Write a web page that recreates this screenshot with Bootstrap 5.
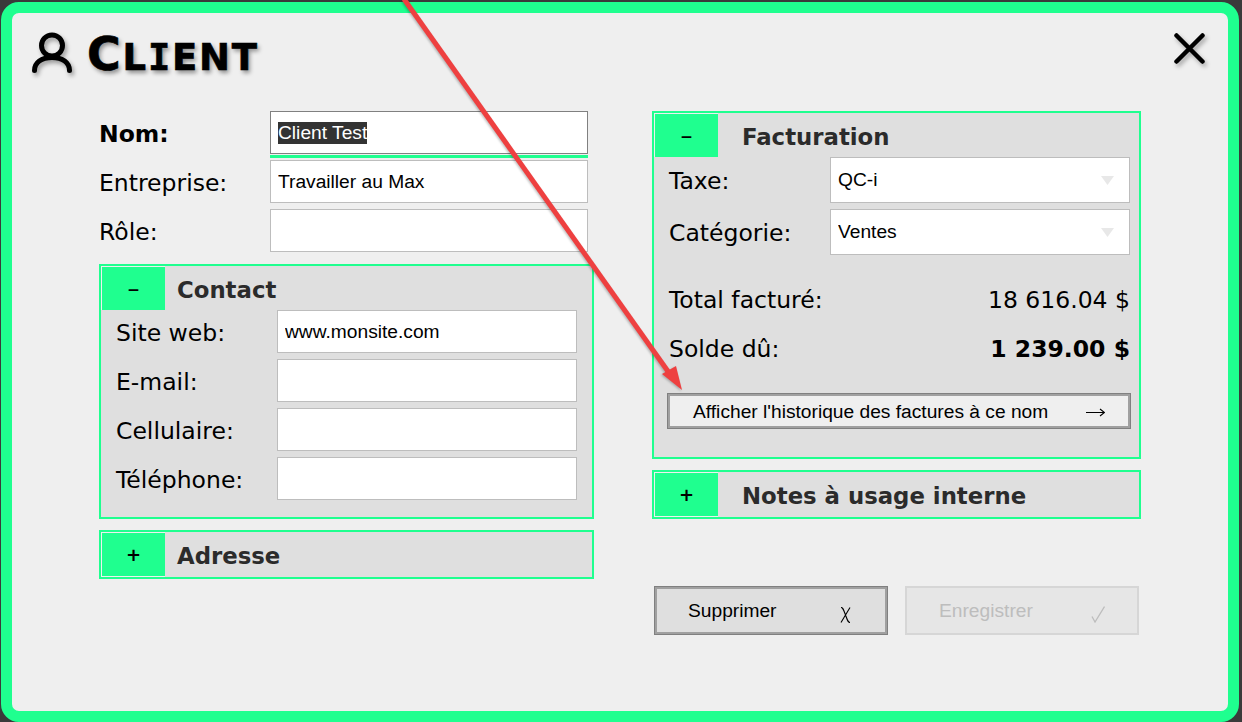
<!DOCTYPE html>
<html lang="fr">
<head>
    <meta charset="UTF-8">
    <meta name="viewport" content="width=device-width, initial-scale=1.0">
    <title>Client</title>
    <link href="https://cdn.jsdelivr.net/npm/bootstrap@5.3.0/dist/css/bootstrap.min.css" rel="stylesheet">
    <style>
        html, body { height: 100%; overflow: hidden; }
        body { background: #3a3a3a; padding: 2px 3px 0 1px; font-family: "DejaVu Sans", sans-serif; color: #000; position: relative; }
        .win-frame { height: 720px; background: #efefef; border: 11px solid #1fff8f; border-radius: 18px; box-sizing: border-box; position: relative; }
        .win-head { height: 98px; padding: 19px 0 0 20px; gap: 15px; }
        .win-title { font: bold 37px "DejaVu Sans", sans-serif; text-transform: uppercase; letter-spacing: 1.8px; margin: 0; -webkit-text-stroke: .6px #000; text-shadow: 2px 3px 4px rgba(0,0,0,.4); line-height: 44px; white-space: nowrap; }
        .title-cap { font-size: 46px; }
        .title-slab { font-family: "DejaVu Sans Mono", monospace; }
        .user-icon { filter: drop-shadow(2px 3px 2px rgba(0,0,0,.35)); }
        .win-close { position: absolute; top: 20px; right: 23px; background: none; border: 0; padding: 0; line-height: 0; filter: drop-shadow(2px 3px 2px rgba(0,0,0,.3)); }
        .form-wrap { padding-left: 87px; gap: 58px; }
        .col-left { width: 495px; }
        .col-right { width: 489px; }
        .field-row { display: flex; align-items: center; }
        .field-label { font-size: 23.5px; line-height: 1; margin: 0; padding-top: 4px; }
        .field-box { font: 19.2px "Liberation Sans", sans-serif; color: #000; background: #fff; border: 1px solid #bdbdbd; border-radius: 0; height: 43px; padding: 0 7px; outline: 0; width: 300px; flex-shrink: 0; }
        .top-rows { margin-bottom: 12px; }
        .top-rows .field-label { width: 171px; }
        .top-rows .field-box { width: 318px; }
        .top-rows .field-row + .field-row { margin-top: 6px; }
        .top-rows .name-box { border-color: #808080; box-shadow: 0 1px 0 #efefef, 0 4px 0 #1fff8f; }
        .name-box::selection { background: #333; color: #fff; }
        .fold-panel { background: #dfdfdf; border: 2px solid #1fff8f; }
        .fold-head { display: flex; align-items: center; }
        .fold-btn { width: 64px; height: 44px; background: #1fff8f; border: 0; border-left: 1px solid #efefef; border-top: 1px solid #efefef; padding: 0; font: 24px "DejaVu Sans", sans-serif; color: #000; line-height: 1; border-radius: 0; }
        .fold-closed .fold-btn { height: 45px; border-bottom: 1px solid #efefef; font-weight: 700; font-size: 18px; }
        .fold-title { font-size: 22.8px; font-weight: 700; color: #2b2b2b; margin: 0; line-height: 1; padding-top: 4px; }
        .title-left { margin-left: 12px; }
        .title-right { margin-left: 24px; }
        .gap-panel { margin-top: 11px; }
        .contact-body { padding: 0 15px 17px 15px; }
        .contact-body .field-label { width: 161px; }
        .contact-body .field-row { margin-bottom: 6px; }
        .contact-body .field-row:last-child { margin-bottom: 0; }
        .pick-box { height: 46px; padding-bottom: 2px; appearance: none; -webkit-appearance: none; background: #fff url("data:image/svg+xml,%3Csvg xmlns='http://www.w3.org/2000/svg' width='13' height='9'%3E%3Cpath d='M0 0h13L6.5 9z' fill='%23e8e8e8'/%3E%3C/svg%3E") no-repeat right 15px center; }
        .bill-body { padding: 0 9px 28px 15px; }
        .bill-body .field-label { width: 161px; padding-top: 3px; }
        .bill-body .field-row + .field-row { margin-top: 6px; }
        .total-row { display: flex; justify-content: space-between; align-items: center; font-size: 23.5px; height: 49px; }
        .bill-totals { padding-top: 21px; padding-bottom: 19px; }
        .rule-btn { font: 19.2px "Liberation Sans", sans-serif; color: #000; display: flex; justify-content: space-between; align-items: center; border: 1px solid #808080; box-shadow: inset 0 0 0 2px #a0a0a0; border-radius: 0; background: #efefef; flex-shrink: 0; }
        .history-btn { width: 464px; height: 36px; margin-left: -2px; padding: 2px 25px 0 25px; }
        .action-row { margin-top: 67px; margin-left: 2px; gap: 17px; }
        .action-btn { height: 49px; width: 234px; padding: 0 36px 0 33px; background: #dfdfdf; }
        .action-btn:disabled { background: #e6e6e6; color: #bdbdbd; border-color: #d6d6d6; box-shadow: inset 0 0 0 1px #d6d6d6; opacity: 1; padding-right: 33px; }
        .note-arrow { position: absolute; left: 0; top: 0; pointer-events: none; filter: drop-shadow(-1px 1px 1px rgba(0,0,0,.25)); }
    </style>
</head>
<body>
    <div class="win-frame">
        <div class="win-head d-flex align-items-start">
            <svg class="user-icon" width="40" height="41" viewBox="0 0 40 41" fill="none" stroke="#000" stroke-width="5" stroke-linecap="round">
                <circle cx="20" cy="13.5" r="10.5"/>
                <path d="M2.5 38.5c0-8 7-13 17.5-13s17.5 5 17.5 13"/>
            </svg>
            <h1 class="win-title"><span class="title-cap">C</span>l<span class="title-slab">i</span>ent</h1>
        </div>
        <button class="win-close" aria-label="Fermer">
            <svg width="31" height="31" viewBox="0 0 31 31" stroke="#000" stroke-width="4.5" stroke-linecap="round"><path d="M2.5 2.5l26 26M28.5 2.5l-26 26"/></svg>
        </button>

        <div class="form-wrap d-flex align-items-start">
            <div class="col-left">
                <div class="top-rows">
                    <div class="field-row"><label class="field-label fw-bold">Nom:</label><input id="nom" class="field-box name-box" value="Client Test"></div>
                    <div class="field-row"><label class="field-label">Entreprise:</label><input class="field-box" value="Travailler au Max"></div>
                    <div class="field-row"><label class="field-label">Rôle:</label><input class="field-box"></div>
                </div>
                <div class="fold-panel">
                    <div class="fold-head"><button class="fold-btn">–</button><h2 class="fold-title title-left">Contact</h2></div>
                    <div class="contact-body">
                        <div class="field-row"><label class="field-label">Site web:</label><input class="field-box" value="www.monsite.com"></div>
                        <div class="field-row"><label class="field-label">E-mail:</label><input class="field-box"></div>
                        <div class="field-row"><label class="field-label">Cellulaire:</label><input class="field-box"></div>
                        <div class="field-row"><label class="field-label">Téléphone:</label><input class="field-box"></div>
                    </div>
                </div>
                <div class="fold-panel fold-closed gap-panel">
                    <div class="fold-head"><button class="fold-btn">+</button><h2 class="fold-title title-left">Adresse</h2></div>
                </div>
            </div>
            <div class="col-right">
                <div class="fold-panel">
                    <div class="fold-head"><button class="fold-btn">–</button><h2 class="fold-title title-right">Facturation</h2></div>
                    <div class="bill-body">
                        <div class="field-row"><label class="field-label">Taxe:</label><select class="field-box pick-box"><option>QC-i</option></select></div>
                        <div class="field-row"><label class="field-label">Catégorie:</label><select class="field-box pick-box"><option>Ventes</option></select></div>
                        <div class="bill-totals">
                            <div class="total-row"><span>Total facturé:</span><span>18 616.04 $</span></div>
                            <div class="total-row"><span>Solde dû:</span><span class="fw-bold">1 239.00 $</span></div>
                        </div>
                        <button class="rule-btn history-btn"><span>Afficher l'historique des factures à ce nom</span>
                            <svg width="19" height="9" viewBox="0 0 19 9" fill="none" stroke="#000" stroke-width="1.1"><path d="M0 4.5h18M14 1l4.5 3.5L14 8"/></svg>
                        </button>
                    </div>
                </div>
                <div class="fold-panel fold-closed gap-panel">
                    <div class="fold-head"><button class="fold-btn">+</button><h2 class="fold-title title-right">Notes à usage interne</h2></div>
                </div>
                <div class="action-row d-flex">
                    <button class="rule-btn action-btn"><span>Supprimer</span>
                        <svg class="mt-2" width="11" height="16" viewBox="0 0 11 16" fill="none" stroke="#000" stroke-width="1.1"><path d="M1 0.5c2 0 2.5 2 4.5 7.500s2.500 7.500 4.500 7.500M10 0.5L1 15.500"/></svg>
                    </button>
                    <button class="rule-btn action-btn" disabled><span>Enregistrer</span>
                        <svg class="mt-2" width="14" height="17" viewBox="0 0 14 17" fill="none" stroke="#bdbdbd" stroke-width="1.3"><path d="M1 10.500L4 16L13.500 0.500"/></svg>
                    </button>
                </div>
            </div>
        </div>
    </div>
    <svg class="note-arrow" width="1242" height="722" viewBox="0 0 1242 722">
        <path d="M404 -1L672 377" stroke="#ee4040" stroke-width="5" fill="none"/>
        <path d="M682 390L662 374L669 370L676 366z" fill="#ee4040"/>
    </svg>
    <script src="https://cdn.jsdelivr.net/npm/bootstrap@5.3.0/dist/js/bootstrap.bundle.min.js"></script>
    <script>
        // Name is preselected when the dialog opens
        const nom = document.getElementById('nom');
        nom.focus();
        nom.select();
    </script>
</body>
</html>
